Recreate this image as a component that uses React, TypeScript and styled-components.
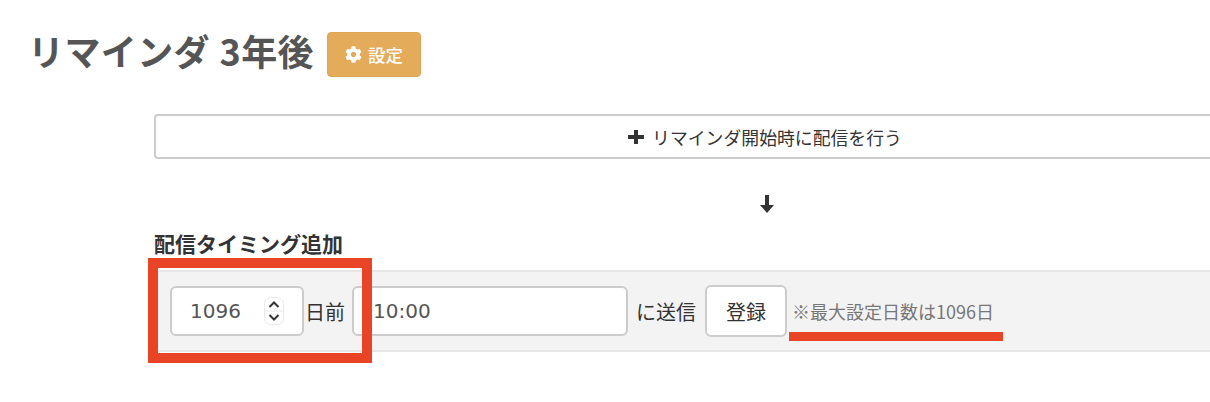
import styled, { createGlobalStyle } from 'styled-components';
import { FaCog } from 'react-icons/fa';

const GlobalStyle = createGlobalStyle`
  html, body {
    margin: 0;
    background: #fff;
    overflow: hidden;
  }
  body {
    font-family: "Noto Sans CJK JP", "Noto Sans", sans-serif;
    color: #333;
  }
`;

const Page = styled.div`
  position: relative;
  width: 1210px;
  height: 402px;
  overflow: hidden;
  box-sizing: border-box;
  padding: 32px 0 0 28px;
`;

const Header = styled.div`
  display: flex;
  align-items: center;
  gap: 13px;
  height: 45px;
`;

const Title = styled.h1`
  margin: 0;
  margin-top: -8px;
  font-size: 36px;
  line-height: 45px;
  font-weight: 700;
  letter-spacing: 0.4px;
  word-spacing: 1px;
  color: #555;
  white-space: nowrap;
`;

const SettingButton = styled.button`
  display: flex;
  align-items: center;
  justify-content: center;
  gap: 6px;
  width: 94px;
  height: 45px;
  padding: 0;
  background: #e4ab5b;
  border: 1px solid #dea552;
  border-radius: 4px;
  color: #fff;
  font: 500 17.5px "Noto Sans CJK JP", sans-serif;
`;

const Content = styled.div`
  width: 1226px;
  margin: 37px 0 0 126px;
`;

const StartButton = styled.button`
  display: flex;
  align-items: center;
  justify-content: center;
  gap: 8px;
  width: 100%;
  height: 45px;
  padding: 0 4px 0 0;
  background: #fff;
  border: 2px solid #ccc;
  border-radius: 4px;
  color: #333;
  font: 400 17.85px "Noto Sans CJK JP", sans-serif;
`;

const ArrowRow = styled.div`
  display: flex;
  justify-content: center;
  margin-top: 36px;
  height: 19px;
`;

const SectionLabel = styled.div`
  margin-top: 14px;
  font-size: 21px;
  line-height: 30px;
  font-weight: 700;
  color: #333;
`;

const TimingBar = styled.div`
  display: flex;
  align-items: center;
  height: 82px;
  box-sizing: border-box;
  margin-top: 12px;
  padding: 0 16px;
  background: #f3f3f3;
  border-top: 2px solid #e6e6e6;
  border-bottom: 2px solid #e6e6e6;
`;

const NumberBox = styled.div`
  display: flex;
  align-items: center;
  box-sizing: border-box;
  width: 134px;
  height: 50px;
  padding-left: 18px;
  background: #fff;
  border: 2px solid #ccc;
  border-radius: 6px;
  font-size: 20px;
  color: #555;
  font-family: "DejaVu Sans", sans-serif;
`;

const NumberValue = styled.span`
  flex: 1;
`;

const Spinner = styled.svg`
  margin-right: 18px;
`;

const Unit = styled.span`
  font-size: 20px;
  color: #333;
  margin-left: 1px;
  margin-right: 7px;
  white-space: nowrap;
`;

const TimeBox = styled.div`
  display: flex;
  align-items: center;
  box-sizing: border-box;
  width: 276px;
  height: 50px;
  padding-left: 19px;
  background: #fff;
  border: 2px solid #ccc;
  border-radius: 6px;
  font: 20px "DejaVu Sans", sans-serif;
  color: #555;
`;

const SendLabel = styled(Unit)`
  margin-left: 8px;
  margin-right: 9px;
`;

const SubmitButton = styled.button`
  width: 82px;
  height: 52px;
  padding: 0;
  background: #fff;
  border: 2px solid #ccc;
  border-radius: 6px;
  color: #333;
  font: 400 20px "Noto Sans CJK JP", sans-serif;
`;

const Note = styled.span`
  margin-left: 5px;
  font-size: 18px;
  color: #777;
  white-space: nowrap;
`;

const RedFrame = styled.div`
  position: absolute;
  left: 148px;
  top: 258px;
  width: 224px;
  height: 105px;
  box-sizing: border-box;
  border: 10px solid #e94425;
  pointer-events: none;
`;

const RedLine = styled.div`
  position: absolute;
  left: 789px;
  top: 332px;
  width: 214px;
  height: 9px;
  background: #e94425;
`;

export default function App() {
  return (
    <>
      <GlobalStyle />
      <Page>
        <Header>
          <Title>リマインダ 3年後</Title>
          <SettingButton>
            <FaCog size={17} />
            設定
          </SettingButton>
        </Header>

        <Content>
          <StartButton>
            <svg width="16" height="14" viewBox="0 0 16 14">
              <path d="M6 0h4v5h6v4h-6v5H6V9H0V5h6z" fill="#333" />
            </svg>
            リマインダ開始時に配信を行う
          </StartButton>

          <ArrowRow>
            <svg width="14" height="19" viewBox="0 0 14 19">
              <path d="M5 0h4v10h5l-7 8-7-8h5z" fill="#333" />
            </svg>
          </ArrowRow>

          <SectionLabel>配信タイミング追加</SectionLabel>

          <TimingBar>
            <NumberBox>
              <NumberValue>1096</NumberValue>
              <Spinner width="20" height="28" viewBox="0 0 20 28">
                <rect x="0.5" y="0.5" width="19" height="27" rx="6" fill="#fff" stroke="#e8e8e8" />
                <path d="M0 14h20" stroke="#e8e8e8" />
                <path d="M5.5 10L10 5.5l4.5 4.5M5.5 18L10 22.5l4.5-4.5" fill="none" stroke="#333" strokeWidth="2" />
              </Spinner>
            </NumberBox>
            <Unit>日前</Unit>
            <TimeBox>10:00</TimeBox>
            <SendLabel>に送信</SendLabel>
            <SubmitButton>登録</SubmitButton>
            <Note>※最大設定日数は1096日</Note>
          </TimingBar>
        </Content>

        <RedFrame />
        <RedLine />
      </Page>
    </>
  );
}
